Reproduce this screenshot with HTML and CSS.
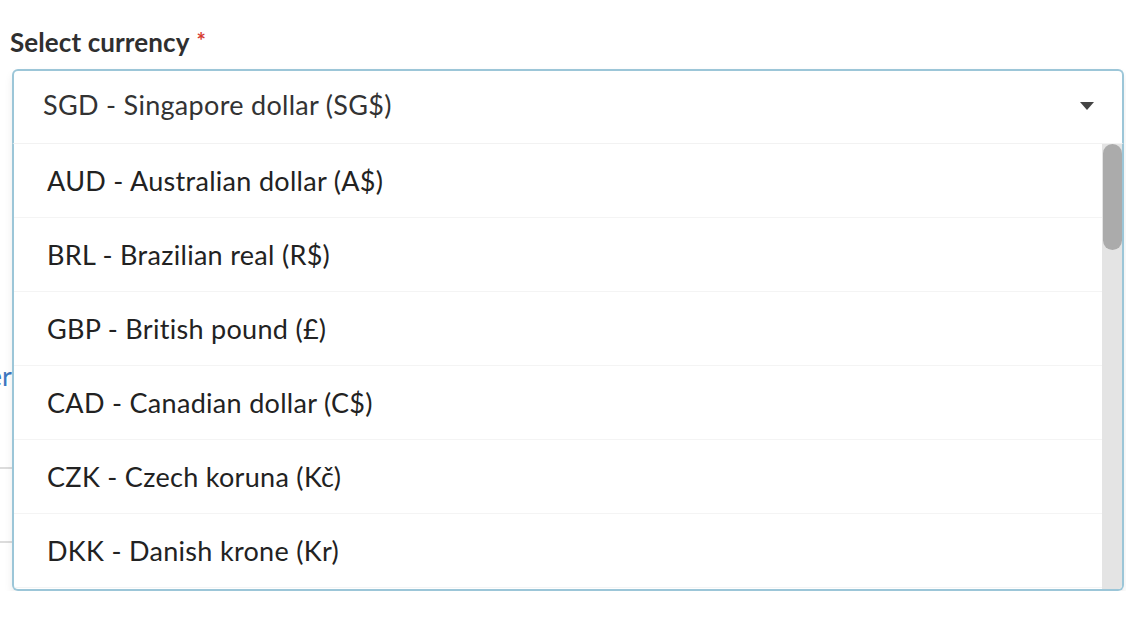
FILE: index.html
```html
<!DOCTYPE html>
<html lang="en">
<head>
<meta charset="utf-8">
<title>Select currency</title>
<link rel="stylesheet" href="styles.css">
</head>
<body>
<div class="page">
  <label class="label">Select currency<span class="req">*</span></label>
  <div class="stack">
    <div class="behind">
      <a class="link" href="#">Enter exchange rate manually</a>
      <div class="input-box"></div>
    </div>
    <div class="select">
      <div class="select-head">
        <span class="select-value">SGD - Singapore dollar (SG$)</span>
        <span class="caret"></span>
      </div>
      <div class="menu">
        <ul class="options">
          <li>AUD - Australian dollar (A$)</li>
          <li>BRL - Brazilian real (R$)</li>
          <li>GBP - British pound (£)</li>
          <li>CAD - Canadian dollar (C$)</li>
          <li>CZK - Czech koruna (Kč)</li>
          <li>DKK - Danish krone (Kr)</li>
          <li>EUR - Euro (€)</li>
        </ul>
        <div class="scrollbar"><div class="thumb"></div></div>
      </div>
    </div>
  </div>
</div>
</body>
</html>
```

FILE: styles.css
```css
* { box-sizing: border-box; }
html, body { margin: 0; padding: 0; background: #fff; }
body {
  font-family: Lato, "Open Sans", "Liberation Sans", sans-serif;
  color: #333;
}
.page {
  padding-top: 26px;
}
.label {
  display: block;
  padding-left: 10px;
  font-size: 26px;
  line-height: 30px;
  font-weight: 700;
  letter-spacing: 0.1px;
  color: #2f2f2f;
  margin-bottom: 12px;
}
.req {
  color: #d63b2f;
  margin-left: 7px;
  font-size: 22px;
  vertical-align: 3px;
}
.stack {
  display: grid;
}
.stack > * {
  grid-area: 1 / 1;
}
.behind {
  padding-top: 292px;
}
.link {
  display: block;
  font-size: 27px;
  line-height: 30px;
  color: #3d78c0;
  text-decoration: none;
  margin-left: -52px;
  white-space: nowrap;
}
.input-box {
  margin-top: 76px;
  height: 76px;
  width: 600px;
  border-top: 2px solid #dcdcdc;
  border-bottom: 2px solid #dcdcdc;
}
.select {
  z-index: 1;
  margin-left: 12px;
  width: 1112px;
  align-self: start;
  border-radius: 6px;
  box-shadow: 0 5px 8px rgba(0, 0, 0, 0.08);
  background: #fff;
}
.select-head {
  display: flex;
  align-items: center;
  justify-content: space-between;
  height: 74px;
  border: 2px solid #9cc6d8;
  border-bottom: none;
  border-radius: 6px 6px 0 0;
  padding: 0 28px 5px 29px;
  font-size: 27px;
  letter-spacing: 0.3px;
  color: #333;
}
.caret {
  width: 0;
  height: 0;
  border-left: 7px solid transparent;
  border-right: 7px solid transparent;
  border-top: 8px solid #444;
  margin-top: 2px;
}
.menu {
  display: flex;
  height: 448px;
  border: 2px solid #9cc6d8;
  border-top: 1px solid #f2f2f2;
  border-radius: 0 0 6px 6px;
  overflow: hidden;
}
.options {
  flex: 1;
  margin: 0;
  padding: 0;
  list-style: none;
  overflow: hidden;
}
.options li {
  height: 74px;
  display: flex;
  align-items: center;
  padding-left: 33px;
  font-size: 27px;
  letter-spacing: 0.3px;
  color: #222;
  border-bottom: 1px solid #f4f4f4;
}
.scrollbar {
  width: 20px;
  flex: none;
  background: #e4e4e4;
  padding: 0 0 0 1px;
}
.thumb {
  height: 106px;
  border-radius: 10px;
  background: #ababab;
}
```
